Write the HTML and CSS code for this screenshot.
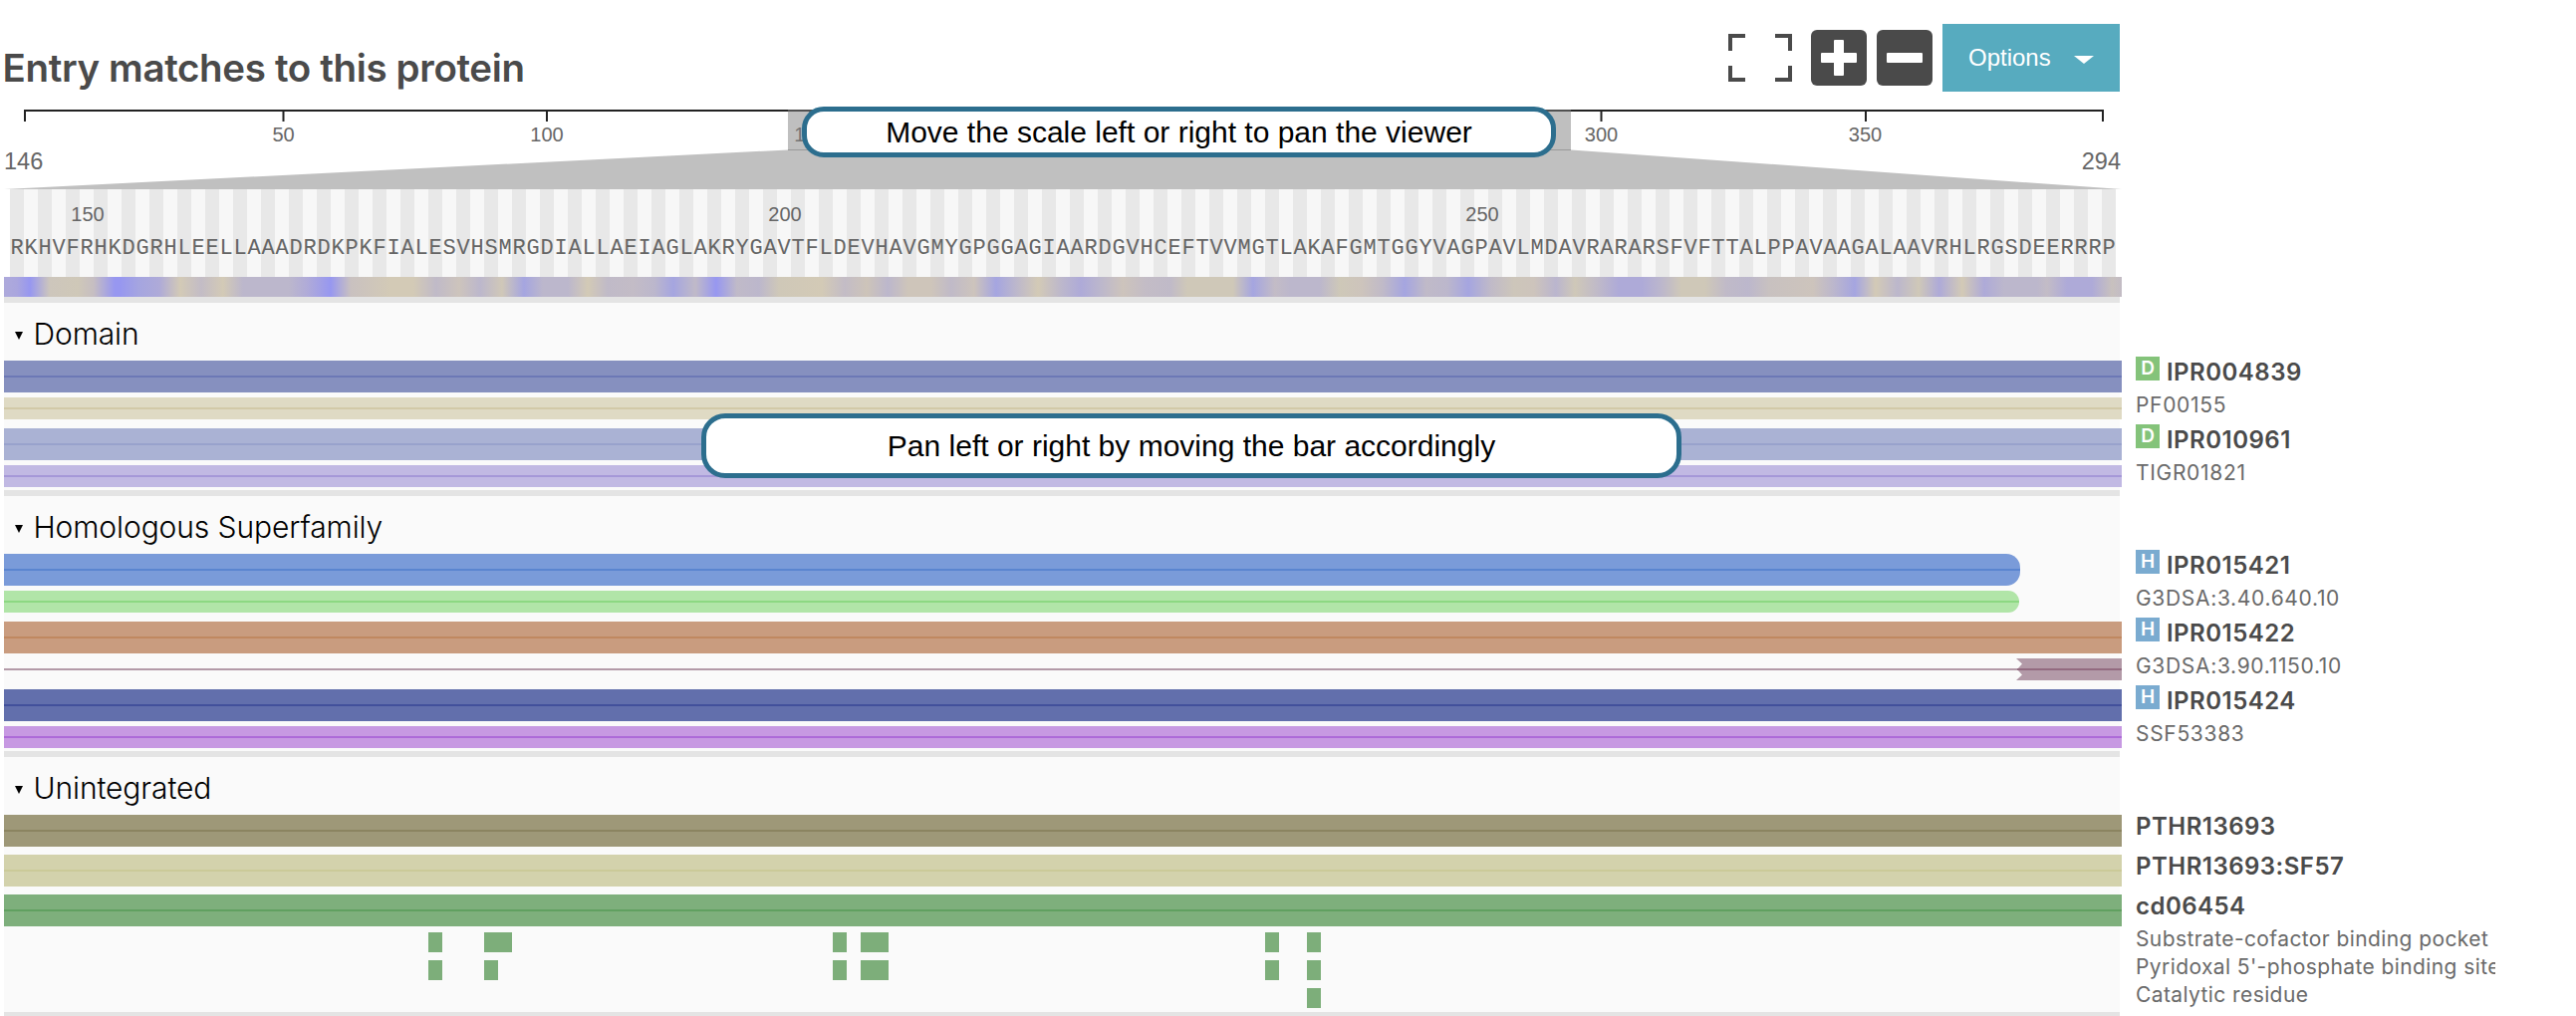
FILE: index.html
```html
<!DOCTYPE html>
<html lang="en">
<head>
<meta charset="utf-8">
<title>Entry matches to this protein</title>
<link rel="stylesheet" href="styles.css">
</head>
<body>
<main class="viewer">
  <header class="header">
    <h1 class="title">Entry matches to this protein</h1>
    <div class="toolbar">
      <svg class="icon-full" viewBox="0 0 64 48" width="64" height="48"><path d="M2 17V2H17M47 2H62V17M2 32V46H17M47 46H62V32" fill="none" stroke="#4a4a4a" stroke-width="4"/></svg>
      <svg class="icon-zoom" viewBox="0 0 56 56" width="56" height="56"><rect width="56" height="56" rx="6" fill="#4a4a4a"/><path d="M23 11q0-1 1-1h8q1 0 1 1v12h12q1 0 1 1v8q0 1-1 1H33v12q0 1-1 1h-8q-1 0-1-1V33H11q-1 0-1-1v-8q0-1 1-1h12z" fill="#fff"/></svg>
      <svg class="icon-zoom" viewBox="0 0 56 56" width="56" height="56"><rect width="56" height="56" rx="6" fill="#4a4a4a"/><rect x="10" y="23" width="36" height="10" rx="1" fill="#fff"/></svg>
      <button class="options">Options<svg viewBox="0 0 20 8" width="20" height="8"><path d="M0 0H20L10 8Z" fill="#fff"/></svg></button>
    </div>
  </header>

  <section class="navigation">
    <svg class="ruler" viewBox="0 0 2134 84" width="2134" height="84">
      <path d="M24 5H2112M25 5V16M284.500 5V16M549 5V16M813.500 5V16M1607.500 5V16M1873 5V16M2111 5V16" fill="none" stroke="#222" stroke-width="2"/>
      <g class="ruler-numbers" text-anchor="middle">
        <text x="284.500" y="36">50</text>
        <text x="549" y="36">100</text>
        <text x="814" y="36">150</text>
        <text x="1607.500" y="36">300</text>
        <text x="1872.500" y="36">350</text>
      </g>
      <rect x="791" y="4" width="786" height="41" fill="#808080" fill-opacity=".5"/>
      <path d="M791 44.500L4 84H2130L1577 44.500Z" fill="#c0c0c0"/>
      <path d="M791 44.500H1577" stroke="#999"/>
      <text class="range" x="4" y="64">146</text>
      <text class="range" x="2129" y="64" text-anchor="end">294</text>
    </svg>
    <div class="tip tip-scale">Move the scale left or right to pan the viewer</div>
  </section>

  <section class="sequence">
    <div class="positions"><span>150</span><span>200</span><span>250</span></div>
    <div class="residues">RKHVFRHKDGRHLEELLAAADRDKPKFIALESVHSMRGDIALLAEIAGLAKRYGAVTFLDEVHAVGMYGPGGAGIAARDGVHCEFTVVMGTLAKAFGMTGGYVAGPAVLMDAVRARARSFVFTTALPPAVAAGALAAVRHLRGSDEERRRP</div>
  </section>
  <div class="hydrophobicity"></div>

  <div class="groups">
    <section class="group">
      <h2 class="caption"><svg viewBox="0 0 8 8" width="8" height="8"><path d="M0 0H8L4 8Z"/></svg>Domain</h2>
      <div class="row entry"><div class="bar c-ipr004839"></div><div class="label"><b class="badge domain">D</b>IPR004839</div></div>
      <div class="row member"><div class="bar c-pf00155"></div><div class="label">PF00155</div></div>
      <div class="row entry"><div class="bar c-ipr010961"></div><div class="label"><b class="badge domain">D</b>IPR010961</div></div>
      <div class="row member"><div class="bar c-tigr01821"></div><div class="label">TIGR01821</div></div>
      <div class="tip tip-bar">Pan left or right by moving the bar accordingly</div>
    </section>

    <section class="group">
      <h2 class="caption"><svg viewBox="0 0 8 8" width="8" height="8"><path d="M0 0H8L4 8Z"/></svg>Homologous Superfamily</h2>
      <div class="row entry"><div class="bar ends c-ipr015421"></div><div class="label"><b class="badge family">H</b>IPR015421</div></div>
      <div class="row member"><div class="bar ends c-g3dsa340"></div><div class="label">G3DSA:3.40.640.10</div></div>
      <div class="row entry"><div class="bar c-ipr015422"></div><div class="label"><b class="badge family">H</b>IPR015422</div></div>
      <div class="row member">
        <svg class="bar" viewBox="0 0 2126 22" width="2126" height="22"><path d="M2020 0H2126V22H2020L2026 16.500L2021 11L2026 5.500Z" fill="#b39aa8"/><path d="M0 11H2021" stroke="#b39aa8" stroke-width="2"/><path d="M2021 11H2126" stroke="#936a80" stroke-width="2"/></svg>
        <div class="label">G3DSA:3.90.1150.10</div>
      </div>
      <div class="row entry"><div class="bar c-ipr015424"></div><div class="label"><b class="badge family">H</b>IPR015424</div></div>
      <div class="row member"><div class="bar c-ssf53383"></div><div class="label">SSF53383</div></div>
    </section>

    <section class="group">
      <h2 class="caption"><svg viewBox="0 0 8 8" width="8" height="8"><path d="M0 0H8L4 8Z"/></svg>Unintegrated</h2>
      <div class="row entry"><div class="bar c-pthr"></div><div class="label">PTHR13693</div></div>
      <div class="row entry"><div class="bar c-pthrsf"></div><div class="label">PTHR13693:SF57</div></div>
      <div class="row entry"><div class="bar c-cd"></div><div class="label">cd06454</div></div>
      <div class="row site"><svg class="bar" viewBox="0 0 2126 20" width="2126" height="20"><path d="M426 0h14v20h-14zM482 0h28v20h-28zM832 0h14v20h-14zM860 0h28v20h-28zM1266 0h14v20h-14zM1308 0h14v20h-14z"/></svg><div class="label">Substrate-cofactor binding pocket</div></div>
      <div class="row site"><svg class="bar" viewBox="0 0 2126 20" width="2126" height="20"><path d="M426 0h14v20h-14zM482 0h14v20h-14zM832 0h14v20h-14zM860 0h28v20h-28zM1266 0h14v20h-14zM1308 0h14v20h-14z"/></svg><div class="label">Pyridoxal 5'-phosphate binding site</div></div>
      <div class="row site"><svg class="bar" viewBox="0 0 2126 20" width="2126" height="20"><path d="M1308 0h14v20h-14z"/></svg><div class="label">Catalytic residue</div></div>
    </section>
  </div>
</main>
</body>
</html>
```
FILE: styles.css
```css
* { box-sizing: border-box; }
body {
  margin: 0;
  height: 1020px;
  overflow: hidden;
  background: #fff;
  color: #4a4a4a;
  font-family: Inter, "Liberation Sans", sans-serif;
}
svg { display: block; flex: none; }
.viewer { display: flex; flex-direction: column; }

/* title and toolbar */
.header {
  display: flex;
  justify-content: space-between;
  width: 2128px;
  height: 106px;
  padding: 24px 0 0 2.500px;
}
.title {
  margin: 0;
  font-size: 38.500px;
  line-height: 88px;
  font-weight: 600;
  letter-spacing: -0.350px;
  white-space: nowrap;
}
.toolbar { display: flex; align-items: center; height: 68px; gap: 10px; }
.icon-full { margin-right: 9px; }
.options {
  display: flex;
  align-items: center;
  justify-content: space-between;
  width: 178px;
  height: 68px;
  padding: 0 26px 0;
  border: 0;
  background: #57abbf;
  color: #fff;
  font: 24px "Liberation Sans", sans-serif;
}
.options svg { margin-top: 3px; }

/* full-length ruler with the visible window */
.navigation { position: relative; height: 84px; }
.navigation text { font-family: "Liberation Sans", sans-serif; font-size: 20px; fill: #666; }
.navigation .range { font-size: 23.500px; }
.tip {
  position: absolute;
  display: flex;
  align-items: center;
  justify-content: center;
  border: 5px solid #2c6e8e;
  background: #fff;
  color: #000;
  font: 30px "Liberation Sans", sans-serif;
  white-space: nowrap;
}
.tip-scale { left: 805px; top: 1px; width: 757px; height: 51px; border-radius: 22px; }
.tip-bar { left: 700px; top: 111px; width: 984px; height: 65px; border-radius: 24px; }

/* residues */
.sequence {
  width: 2114px;
  height: 88px;
  margin-left: 10px;
  padding-top: 14px;
  background: repeating-linear-gradient(90deg, #e8e8e8 0 14px, #f7f7f7 14px 28px);
  color: #666;
}
.positions {
  display: flex;
  gap: 600px;
  padding-left: 28px;
  font: 20px/22px "Liberation Sans", sans-serif;
}
.positions span { width: 100px; text-align: center; }
.residues {
  margin-top: 12px;
  font: 22px/24px "Liberation Mono", monospace;
  letter-spacing: 0.798px;
  text-indent: 0.400px;
  white-space: nowrap;
}
.hydrophobicity {
  width: 2126px;
  height: 20px;
  margin-left: 4px;
  background: linear-gradient(90deg,
    #aeaadb 0, #aaa6de 13px, #9797f0 26px, #cdc6bc 46px, #cfc8b8 74px, #c6bec2 90px, #9797f0 111px, #9797f0 116px, #a5a5e0 136px, #aeaad8 156px,
    #d3cab6 177px, #c3bcc6 198px, #d3cab6 220px, #bcb7cc 240px, #bcb7cc 286px, #b0abd8 304px, #9797f0 328px, #c9c1c0 348px, #d3cab6 388px,
    #d3cab6 411px, #c0bac8 434px, #cdc4bc 457px, #bcb7cc 478px, #d0c8b8 500px, #a5a5e0 522px, #bcb7cc 541px, #bcb7cc 566px, #d3cab6 586px,
    #c0bac8 606px, #c3bcc6 631px, #bcb7cc 653px, #a5a5e0 672px, #c0bac8 694px, #9797f0 715px, #c0bac8 736px, #bcb7cc 758px, #cfc8b8 778px,
    #d3cab6 821px, #c3bcc6 844px, #cdc4b9 866px, #bcb7cc 887px, #cec5ba 908px, #cec5ba 931px, #c0bac8 951px, #cdc4bc 974px, #a5a5e0 996px,
    #bcb7cc 1016px, #d3cab6 1038px, #bcb7cc 1062px, #aeaad8 1081px, #bcb7cc 1101px, #cdc4bc 1123px, #c3bcc6 1146px, #c0bac8 1171px,
    #cfc8b8 1188px, #cfc8b8 1234px, #a5a5e0 1254px, #c3bcc6 1276px, #bcb7cc 1291px, #bcb7cc 1321px, #cec8b8 1341px, #cdc4bc 1363px,
    #c0bac8 1384px, #a5a5e0 1406px, #c0bac8 1428px, #bcb7cc 1449px, #a5a5e0 1470px, #c0bac8 1493px, #cdc6ba 1516px, #cdc4bc 1536px,
    #bab5ce 1558px, #cfc8b8 1577px, #c0bac8 1599px, #aeaad8 1621px, #aeaad8 1644px, #bcb7cc 1664px, #cfc8b8 1684px, #cfc8b8 1708px,
    #c0bac8 1729px, #bcb7cc 1751px, #c8c1c0 1772px, #cdc4bc 1816px, #bcb7cc 1836px, #a5a5e0 1858px, #d3cab6 1879px, #bcb7cc 1901px,
    #cfc8b8 1922px, #aeaad8 1943px, #d3cab6 1966px, #aeaad8 1988px, #bcb7cc 2008px, #bcb7cc 2041px, #c3bcc6 2051px, #aeaad8 2071px,
    #aeaad8 2096px, #c8c1be 2116px, #c3bcc6 2126px);
}

/* feature groups */
.groups { width: 2124px; margin-left: 4px; background: #fafafa; border-bottom: 6px solid #e4e4e4; }
.group { position: relative; border-top: 6px solid #e4e4e4; }
.caption {
  display: flex;
  align-items: center;
  gap: 10.500px;
  height: 58px;
  margin: 0;
  padding: 4px 0 0 11px;
  color: #000;
  font-size: 30px;
  line-height: 54px;
  font-weight: 300;
  letter-spacing: -0.100px;
}
.caption svg { margin-top: 4px; }
.row { display: flex; gap: 15px; width: 2500.500px; }
.bar { --line: transparent; flex: none; width: 2126px; }
div.bar {
  background-image: linear-gradient(var(--line), var(--line));
  background-size: 100% 2px;
  background-position: center;
  background-repeat: no-repeat;
}
.label { flex: 1; white-space: nowrap; }
.entry { height: 36px; }
.entry .bar { height: 32px; }
.entry .label {
  display: flex;
  gap: 7px;
  margin-left: -1px;
  font-size: 24px;
  line-height: 24px;
  font-weight: 600;
  letter-spacing: 0.480px;
}
.member + .entry { margin-top: 6px; }
.entry + .entry { margin-top: 4px; }
.member { height: 26px; padding-top: 1px; }
.member .bar { height: 22px; }
.member .label, .site .label {
  margin-left: -1px;
  color: #6a6a6a;
  font-size: 21px;
  line-height: 17px;
  letter-spacing: 0.680px;
}
.member .label { margin-top: -1px; }
.site { height: 28px; padding-top: 2px; fill: #7dae7a; }
.site:last-child { height: 26px; }
.site .label {
  height: 28px;
  margin-top: -4px;
  padding-top: 2px;
  overflow: hidden;
  letter-spacing: 0.400px;
}
.badge {
  width: 24px;
  height: 24px;
  margin-top: -4px;
  color: #fff;
  font-size: 19px;
  line-height: 23px;
  font-weight: 600;
  letter-spacing: 0;
  text-align: center;
}
.badge.domain { background: #84c37a; }
.badge.family { background: #7aabd0; }

.c-ipr004839 { background-color: #8690bf; --line: #6c78b6; }
.c-pf00155 { background-color: #dfdac4; --line: #d2c9a8; }
.c-ipr010961 { background-color: #aab2d4; --line: #98a2cc; }
.c-tigr01821 { background-color: #c1b9e3; --line: #a598d8; }
.c-ipr015421 { background-color: #7a9bd9; --line: #5a85d0; }
.c-g3dsa340 { background-color: #b1e5a8; --line: #8cd882; }
.c-ipr015422 { background-color: #c99c7f; --line: #c08860; }
.c-ipr015424 { background-color: #626fac; --line: #42509b; }
.c-ssf53383 { background-color: #c799e2; --line: #ad6ad8; }
.c-pthr { background-color: #9e9878; --line: #8b8460; }
.c-pthrsf { background-color: #d3d2ac; --line: #cbca98; }
.c-cd { background-color: #7eaf7c; --line: #60a060; }
.ends { width: 2024px; margin-right: 102px; border-radius: 0 14px 14px 0; }
.member .ends { width: 2023px; margin-right: 103px; border-radius: 0 11px 11px 0; }
```
